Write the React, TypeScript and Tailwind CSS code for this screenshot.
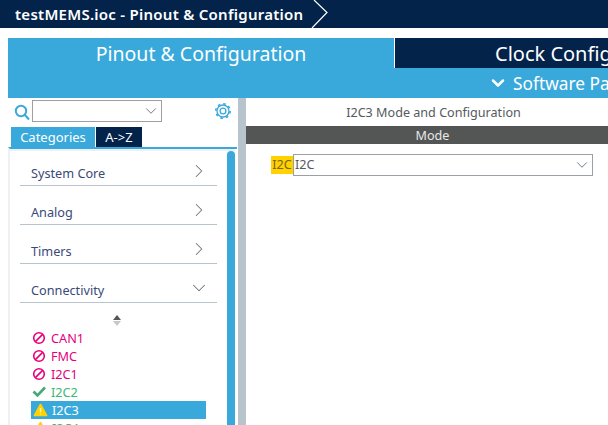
import { ChevronDown, ChevronRight } from "lucide-react";

const categories = [
  { name: "System Core", open: false },
  { name: "Analog", open: false },
  { name: "Timers", open: false },
  { name: "Connectivity", open: true },
];

function BanIcon() {
  return (
    <svg width="14" height="14" viewBox="0 0 14 14" fill="none" stroke="#e6007e" strokeWidth="1.6" className="shrink-0">
      <circle cx="7" cy="7" r="5.3" />
      <path d="M3.4 10.6 L10.6 3.4" />
    </svg>
  );
}

function WarnIcon() {
  return (
    <svg width="15" height="14" viewBox="0 0 15 14" className="shrink-0">
      <path d="M7.5 1.5 L13.6 12.5 L1.4 12.5 Z" fill="#ffd200" stroke="#ffd200" strokeWidth="1.6" strokeLinejoin="round" />
      <path d="M7.5 5 V9.2 M7.5 10.4 V11.6" stroke="#fff6c8" strokeWidth="1.3" />
    </svg>
  );
}

function DisabledItem({ name }: { name: string }) {
  return (
    <div className="flex h-[18px] items-center pl-[1px] text-[#e6007e]">
      <BanIcon />
      <span className="ml-[5px] pt-[2px]">{name}</span>
    </div>
  );
}

export default function App() {
  return (
    <div className="h-[425px] w-[608px] overflow-hidden bg-white font-['Noto_Sans',sans-serif] text-[12.7px]">
      {/* breadcrumb */}
      <div className="flex h-[28px] items-center bg-[#03234b] pl-[15px] text-white">
        <span className="text-[15px] leading-none font-semibold tracking-[0.26px]">testMEMS.ioc - Pinout &amp; Configuration</span>
        <svg width="18" height="28" viewBox="0 0 18 28" className="ml-[8px]" fill="none" stroke="white" strokeWidth="1.2">
          <path d="M3 0 L16 12.5 L1 28" />
        </svg>
      </div>

      {/* main tabs */}
      <div className="mt-[10px] ml-[8px] bg-[#39a9dc] text-white">
        <div className="flex h-[30px]">
          <div className="flex w-[386px] justify-center text-[19.5px] leading-[32px]">
            <span>Pinout &amp; Configuration</span>
          </div>
          <div className="w-[214px] border-l border-white bg-[#03234b] pl-[100px] text-[20px] leading-[32px] whitespace-nowrap">Clock Configuration</div>
        </div>
        <div className="flex h-[30px] items-center pl-[480px] text-[17.3px] whitespace-nowrap">
          <ChevronDown size={20} strokeWidth={3} className="shrink-0" />
          <span className="ml-[5px] pt-[2px]">Software Packs</span>
        </div>
      </div>

      <div className="ml-[8px] flex h-[327px]">
        {/* left panel */}
        <div className="w-[230px]">
          <div className="flex h-[29px] items-start pt-[2px] pr-[6px] pl-[6px]">
            <svg width="16" height="18" viewBox="0 0 16 18" fill="none" stroke="#39a9dc" strokeWidth="2" className="mt-[4px] shrink-0">
              <circle cx="7" cy="7" r="5.2" />
              <path d="M10.5 10.5 L15 15.5" />
            </svg>
            <div className="ml-[2px] flex h-[22px] w-[130px] items-center justify-end border border-[#9aa0a6] pr-[1px]">
              <ChevronDown size={18} strokeWidth={1.25} className="text-[#6b7278]" />
            </div>
            <svg width="18" height="18" viewBox="0 0 18 18" fill="none" stroke="#39a9dc" className="mt-[2px] ml-auto shrink-0">
              <circle cx="9" cy="9" r="6" strokeWidth="1.3" />
              <circle cx="9" cy="9" r="7.2" strokeWidth="1.6" strokeDasharray="2.6 3.05" />
              <circle cx="9" cy="9" r="2.9" strokeWidth="1.3" />
            </svg>
          </div>
          <div className="flex h-[20px] pl-[3px] text-[13px] leading-[20px]">
            <div className="w-[84px] bg-[#39a9dc] text-center text-white">Categories</div>
            <div className="ml-[1px] w-[46px] bg-[#03234b] text-center text-white">A-&gt;Z</div>
          </div>
          <div className="flex h-[278px] w-[229px] border-t-[2px] border-l-[2px] border-[#39a9dc] border-l-[#eef1f3]">
            <div className="flex h-full border-t-[2px] border-[#eef1f3]">
              <div className="w-[217px] pt-[9px] pl-[10px] text-[#3a4a78]">
                <div className="flex flex-col gap-[13px]">
                  {categories.map((c) => (
                    <div key={c.name} className="flex h-[26px] w-[197px] items-center justify-between border-b border-[#b8c4cc] pr-[7px] pl-[11px]">
                      <span className="pt-[2px]">{c.name}</span>
                      {c.open ? (
                        <ChevronDown size={22} strokeWidth={1.1} className="mb-[4px] text-[#6b7278]" />
                      ) : (
                        <ChevronRight size={22} strokeWidth={1.1} className="mb-[4px] text-[#6b7278]" />
                      )}
                    </div>
                  ))}
                </div>
                <div className="flex h-[26px] w-[197px] flex-col items-center justify-center gap-[1px] pt-[9px] pr-[3px]">
                  <div className="h-0 w-0 border-x-[4px] border-b-[5px] border-x-transparent border-b-[#555]" />
                  <div className="h-0 w-0 border-x-[4px] border-t-[5px] border-x-transparent border-t-[#c8c8c8]" />
                </div>
                <div className="ml-[11px] w-[175px]">
                  <DisabledItem name="CAN1" />
                  <DisabledItem name="FMC" />
                  <DisabledItem name="I2C1" />
                  <div className="flex h-[18px] items-center pl-[1px] text-[#3cb878]">
                    <svg width="14" height="14" viewBox="0 0 14 14" fill="none" stroke="#45a878" strokeWidth="2.6" className="shrink-0">
                      <path d="M1.5 6.5 L5.5 10.5 L13 2.5" />
                    </svg>
                    <span className="ml-[5px] pt-[2px]">I2C2</span>
                  </div>
                  <div className="flex h-[18px] items-center bg-[#39a9dc] pl-[2px] text-white">
                    <WarnIcon />
                    <span className="ml-[4px] pt-[2px]">I2C3</span>
                  </div>
                  <div className="flex h-[18px] items-center pl-[2px] text-[#3cb878]">
                    <WarnIcon />
                    <span className="ml-[4px] pt-[2px]">I2C4</span>
                  </div>
                </div>
              </div>
              <div className="h-full w-[8px] rounded-t-[4px] bg-[#39a9dc]" />
            </div>
          </div>
        </div>

        {/* splitter */}
        <div className="h-full w-[8px] bg-[#b8c4cc]" />

        {/* right panel */}
        <div className="w-[362px] text-[12.6px] text-[#555a60]">
          <div className="flex h-[28px] items-center justify-center pt-[2px] pl-[13px]">I2C3 Mode and Configuration</div>
          <div className="flex h-[18px] items-center justify-center bg-[#545656] pt-[2px] pl-[11px] text-[#e8e8e8]">Mode</div>
          <div className="mt-[10px] flex h-[22px] items-center pl-[25px]">
            <span className="flex h-[18px] w-[22px] items-center justify-center bg-[#ffd200] text-[#7a6420]">I2C</span>
            <div className="flex h-[22px] w-[300px] items-center justify-between border border-[#9aa0a6] pr-[1px] pl-[1px]">
              <span>I2C</span>
              <ChevronDown size={18} strokeWidth={1.25} className="text-[#6b7278]" />
            </div>
          </div>
        </div>
      </div>
    </div>
  );
}
